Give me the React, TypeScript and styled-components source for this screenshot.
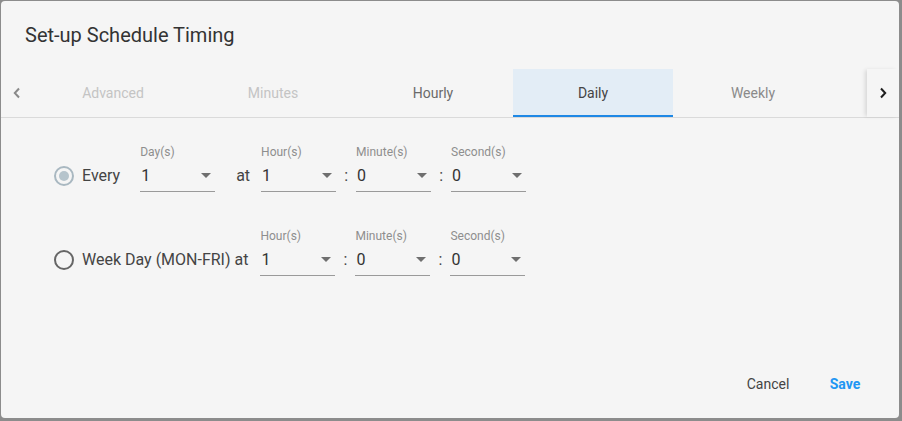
import styled, { createGlobalStyle } from "styled-components";

const GlobalStyle = createGlobalStyle`
  html, body {
    margin: 0;
    padding: 0;
    background: #8c8c8c;
    font-family: Roboto, "Liberation Sans", sans-serif;
  }
`;

const tabs = [
  { label: "Advanced", tone: "disabled" },
  { label: "Minutes", tone: "disabled" },
  { label: "Hourly", tone: "dim" },
  { label: "Daily", tone: "active" },
  { label: "Weekly", tone: "muted" },
] as const;

type Tone = (typeof tabs)[number]["tone"];

const toneColor: Record<Tone, string> = {
  disabled: "#c4c4c4",
  dim: "#6a6a6a",
  active: "#444444",
  muted: "#8a8a8a",
};

const Chevron = ({ dir, color }: { dir: "left" | "right"; color: string }) => (
  <svg width="10" height="12" viewBox="0 0 10 12">
    <path
      d={dir === "left" ? "M7 1.5 2.8 6 7 10.5" : "M3 1.5 7.2 6 3 10.5"}
      fill="none"
      stroke={color}
      strokeWidth="2"
    />
  </svg>
);

const SelectField = ({ label, value }: { label: string; value: string }) => (
  <Field>
    <FieldLabel>{label}</FieldLabel>
    <SelectBox>
      <span>{value}</span>
      <Caret />
    </SelectBox>
  </Field>
);

const App = () => {
  return (
    <>
      <GlobalStyle />
      <Dialog>
        <Title>Set-up Schedule Timing</Title>

        <TabBar>
          <ScrollButton>
            <Chevron dir="left" color="#8a8a8a" />
          </ScrollButton>
          <TabStrip>
            {tabs.map((t) => (
              <Tab key={t.label} $tone={t.tone}>
                {t.label}
              </Tab>
            ))}
          </TabStrip>
          <ScrollButton $shadow>
            <Chevron dir="right" color="#1f1f1f" />
          </ScrollButton>
        </TabBar>

        <Content>
          <OptionRow>
            <Radio $checked />
            <OptionText $gap={20}>Every</OptionText>
            <SelectField label="Day(s)" value="1" />
            <Word>at</Word>
            <SelectField label="Hour(s)" value="1" />
            <Colon>:</Colon>
            <SelectField label="Minute(s)" value="0" />
            <Colon>:</Colon>
            <SelectField label="Second(s)" value="0" />
          </OptionRow>

          <OptionRow>
            <Radio />
            <OptionText $gap={12}>Week Day (MON-FRI) at</OptionText>
            <SelectField label="Hour(s)" value="1" />
            <Colon>:</Colon>
            <SelectField label="Minute(s)" value="0" />
            <Colon>:</Colon>
            <SelectField label="Second(s)" value="0" />
          </OptionRow>
        </Content>

        <Actions>
          <ActionButton>Cancel</ActionButton>
          <ActionButton $primary>Save</ActionButton>
        </Actions>
      </Dialog>
    </>
  );
};

export default App;

const Dialog = styled.div`
  margin: 1px 0 0 1px;
  width: 898px;
  height: 417px;
  border-radius: 4px;
  background: #f5f5f5;
  display: flex;
  flex-direction: column;
  overflow: hidden;
`;

const Title = styled.h2`
  margin: 0;
  height: 68px;
  box-sizing: border-box;
  padding: 18px 24px 0;
  font-size: 20px;
  line-height: 32px;
  font-weight: 400;
  color: #333333;
`;

const TabBar = styled.div`
  display: flex;
  height: 48px;
  border-bottom: 1px solid #dadada;
`;

const ScrollButton = styled.div<{ $shadow?: boolean }>`
  width: 32px;
  flex: none;
  display: flex;
  align-items: center;
  justify-content: center;
  background: #f5f5f5;
  position: relative;
  z-index: 1;
  box-shadow: ${({ $shadow }) =>
    $shadow ? "-3px 0 4px -1px rgba(0, 0, 0, 0.12)" : "none"};
`;

const TabStrip = styled.div`
  flex: 1;
  display: flex;
  overflow: hidden;
`;

const Tab = styled.div<{ $tone: Tone }>`
  width: 160px;
  flex: none;
  box-sizing: border-box;
  display: flex;
  align-items: center;
  justify-content: center;
  font-size: 14px;
  color: ${({ $tone }) => toneColor[$tone]};
  background: ${({ $tone }) => ($tone === "active" ? "#e3edf6" : "transparent")};
  border-bottom: 2px solid
    ${({ $tone }) => ($tone === "active" ? "#1e88e5" : "transparent")};
  padding-top: 2px;
`;

const Content = styled.div`
  flex: 1;
  padding: 26px 0 0 53px;
  display: flex;
  flex-direction: column;
  gap: 36px;
`;

const OptionRow = styled.div`
  display: flex;
  align-items: flex-end;
`;

const Radio = styled.span<{ $checked?: boolean }>`
  width: 20px;
  height: 20px;
  box-sizing: border-box;
  border-radius: 50%;
  border: 2px solid ${({ $checked }) => ($checked ? "#a9b8c1" : "#666666")};
  margin-bottom: 6px;
  flex: none;
  display: flex;
  align-items: center;
  justify-content: center;

  &::after {
    content: "";
    width: 10px;
    height: 10px;
    border-radius: 50%;
    background: ${({ $checked }) => ($checked ? "#b6c4cc" : "transparent")};
  }
`;

const OptionText = styled.span<{ $gap: number }>`
  margin-left: 8px;
  margin-right: ${({ $gap }) => $gap}px;
  font-size: 16px;
  line-height: 32px;
  color: #444444;
  white-space: nowrap;
`;

const Word = styled.span`
  margin: 0 11px 0 21px;
  font-size: 16px;
  line-height: 32px;
  color: #444444;
`;

const Colon = styled.span`
  margin: 0 8px;
  width: 4px;
  text-align: center;
  font-size: 16px;
  line-height: 32px;
  color: #444444;
`;

const Field = styled.div`
  width: 75px;
  display: flex;
  flex-direction: column;
`;

const FieldLabel = styled.span`
  font-size: 12px;
  line-height: 16px;
  color: #8e8e8e;
  white-space: nowrap;
`;

const SelectBox = styled.div`
  height: 32px;
  box-sizing: border-box;
  border-bottom: 1px solid #9a9a9a;
  display: flex;
  align-items: center;
  justify-content: space-between;
  padding: 0 4px 1px 1px;
  font-size: 16px;
  color: #333333;
`;

const Caret = styled.span`
  width: 0;
  height: 0;
  border-left: 5px solid transparent;
  border-right: 5px solid transparent;
  border-top: 5px solid #6f6f6f;
`;

const Actions = styled.div`
  display: flex;
  justify-content: flex-end;
  gap: 13px;
  padding: 0 22px 16px 0;
`;

const ActionButton = styled.button<{ $primary?: boolean }>`
  min-width: 64px;
  height: 36px;
  padding: 6px 8px;
  border: none;
  background: transparent;
  font-family: Roboto, "Liberation Sans", sans-serif;
  font-size: 14px;
  font-weight: ${({ $primary }) => ($primary ? 700 : 400)};
  color: ${({ $primary }) => ($primary ? "#2196f3" : "#444444")};
`;
